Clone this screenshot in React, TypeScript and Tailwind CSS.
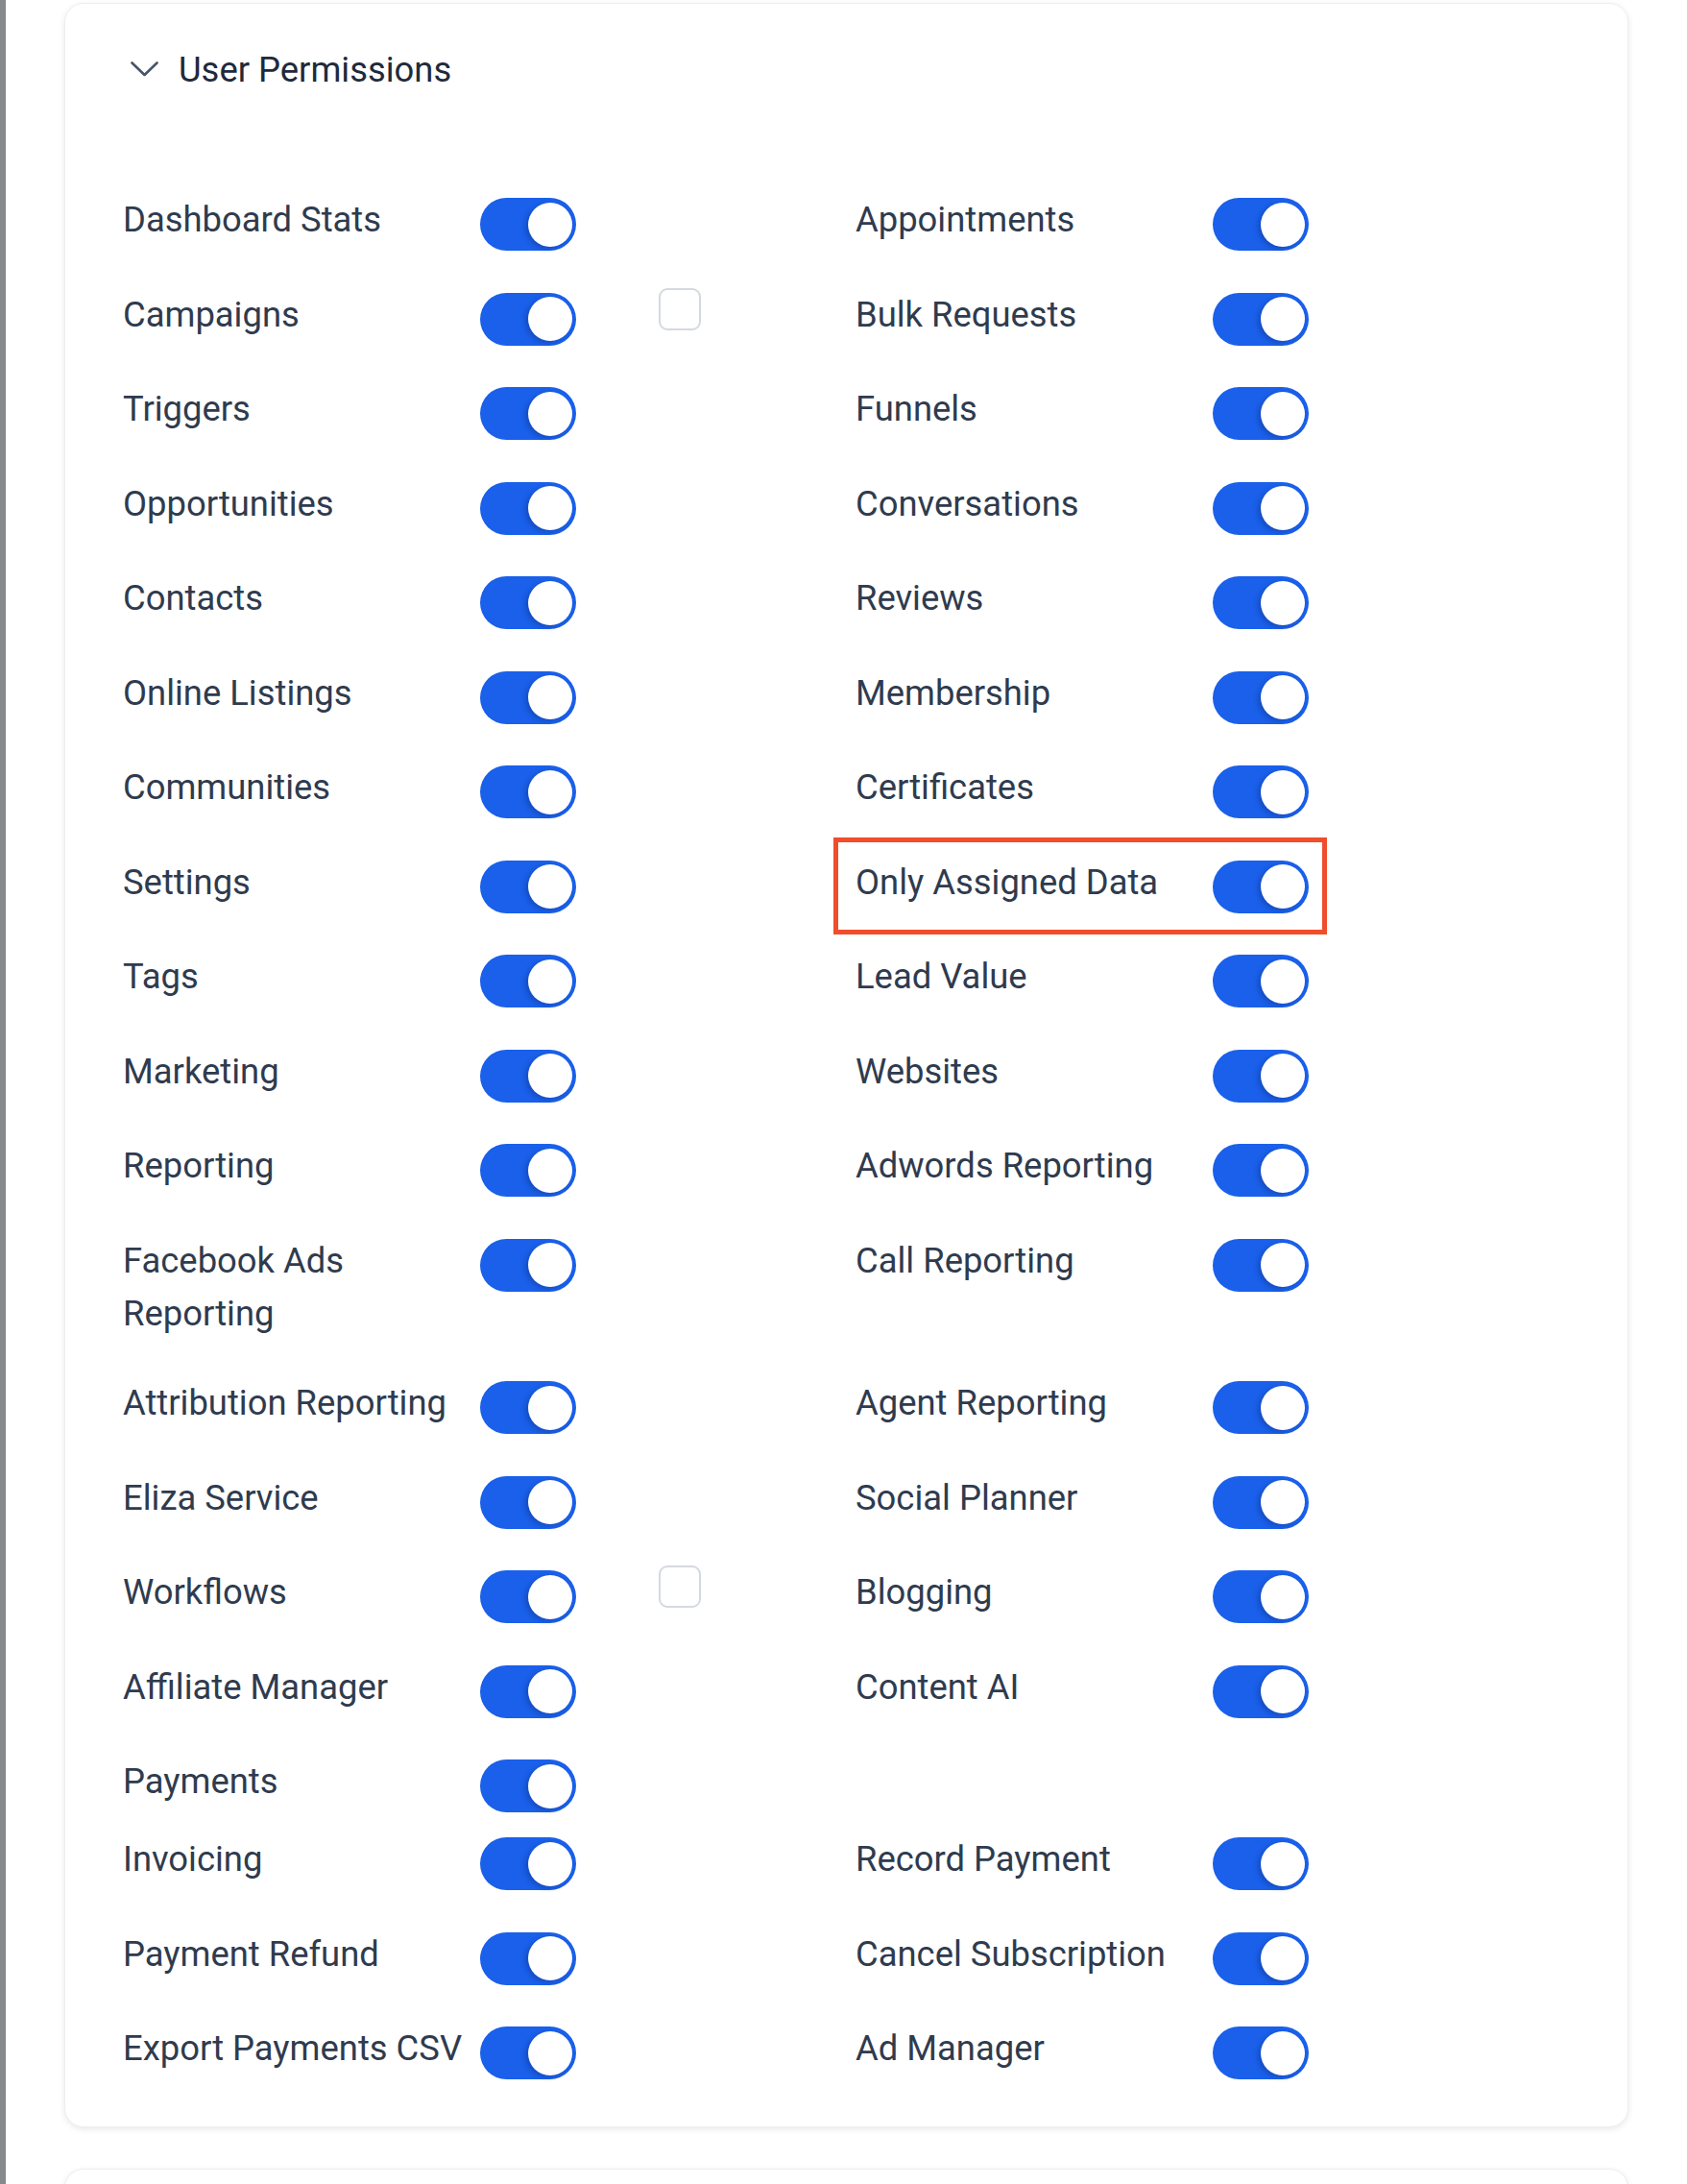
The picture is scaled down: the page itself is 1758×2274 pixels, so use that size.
type Perm = {
  label: string;
  checkbox?: boolean;
  highlight?: boolean;
};

const mainRows: [Perm, Perm | null][] = [
  [{ label: "Dashboard Stats" }, { label: "Appointments" }],
  [{ label: "Campaigns", checkbox: true }, { label: "Bulk Requests" }],
  [{ label: "Triggers" }, { label: "Funnels" }],
  [{ label: "Opportunities" }, { label: "Conversations" }],
  [{ label: "Contacts" }, { label: "Reviews" }],
  [{ label: "Online Listings" }, { label: "Membership" }],
  [{ label: "Communities" }, { label: "Certificates" }],
  [{ label: "Settings" }, { label: "Only Assigned Data", highlight: true }],
  [{ label: "Tags" }, { label: "Lead Value" }],
  [{ label: "Marketing" }, { label: "Websites" }],
  [{ label: "Reporting" }, { label: "Adwords Reporting" }],
  [{ label: "Facebook Ads Reporting" }, { label: "Call Reporting" }],
  [{ label: "Attribution Reporting" }, { label: "Agent Reporting" }],
  [{ label: "Eliza Service" }, { label: "Social Planner" }],
  [{ label: "Workflows", checkbox: true }, { label: "Blogging" }],
  [{ label: "Affiliate Manager" }, { label: "Content AI" }],
  [{ label: "Payments" }, null],
];

const paymentRows: [Perm, Perm][] = [
  [{ label: "Invoicing" }, { label: "Record Payment" }],
  [{ label: "Payment Refund" }, { label: "Cancel Subscription" }],
  [{ label: "Export Payments CSV" }, { label: "Ad Manager" }],
];

const Toggle = () => (
  <div className="mt-[5px] flex h-[55px] w-[100px] shrink-0 items-center justify-end rounded-full bg-[#1a60ea] pr-[4px]">
    <div className="h-[46px] w-[46px] rounded-full bg-white shadow-[-3px_2px_5px_rgba(15,40,120,0.35)]" />
  </div>
);

const PermItem = ({ perm }: { perm: Perm }) => (
  <div className="relative flex items-start">
    {perm.highlight && (
      <div className="absolute -left-[23px] -top-[19px] h-[101px] w-[514px] border-[5px] border-[#f04d2c]" />
    )}
    <span className="w-[372px] shrink-0 pr-[4px] text-[36.4px] leading-[55px] text-[#2f3b4e]">
      {perm.label}
    </span>
    <Toggle />
    {perm.checkbox && (
      <div className="ml-[86px] h-[44px] w-[44px] rounded-[9px] border-[2px] border-[#d4d9e1] bg-white" />
    )}
  </div>
);

const PermGrid = ({ rows }: { rows: [Perm, Perm | null][] }) => (
  <div className="grid grid-cols-[763px_763px] gap-y-[38.5px]">
    {rows.map(([left, right], idx) => (
      <div key={idx} className="contents">
        <PermItem perm={left} />
        {right ? <PermItem perm={right} /> : <div />}
      </div>
    ))}
  </div>
);

export default function App() {
  return (
    <div
      className="flex h-[2274px] w-full overflow-hidden bg-white"
      style={{ fontFamily: "Roboto, 'Noto Sans', sans-serif" }}
    >
      <div className="w-[6px] shrink-0 bg-[#87898c]" />
      <div className="flex flex-1 flex-col gap-[43px] pl-[61px] pr-[60px] pt-[3px]">
        <div className="w-[1629px] rounded-[20px] border border-[#eceef1] bg-white pb-[49px] pl-[60px] pt-[47px] shadow-[0_2px_6px_rgba(30,40,60,0.10)]">
          <div className="flex h-[44px] items-center">
            <svg
              width="29"
              height="16"
              viewBox="0 0 29 16"
              fill="none"
              className="ml-[8px] mt-[-2px] shrink-0"
            >
              <path
                d="M1.5 1.5 L14.5 14 L27.5 1.5"
                stroke="#475569"
                strokeWidth="2.6"
                strokeLinecap="round"
                strokeLinejoin="round"
              />
            </svg>
            <span className="ml-[21px] text-[36.4px] font-normal leading-[44px] text-[#1f2a3c]">
              User Permissions
            </span>
          </div>
          <div className="mt-[106px]">
            <PermGrid rows={mainRows} />
          </div>
          <div className="mt-[21px]">
            <PermGrid rows={paymentRows} />
          </div>
        </div>
        <div className="h-[200px] w-[1629px] shrink-0 rounded-[20px] border border-[#eceef1] bg-white shadow-[0_2px_6px_rgba(30,40,60,0.10)]" />
      </div>
      <div className="w-[1px] shrink-0 bg-[#d4d4d4]" />
    </div>
  );
}
